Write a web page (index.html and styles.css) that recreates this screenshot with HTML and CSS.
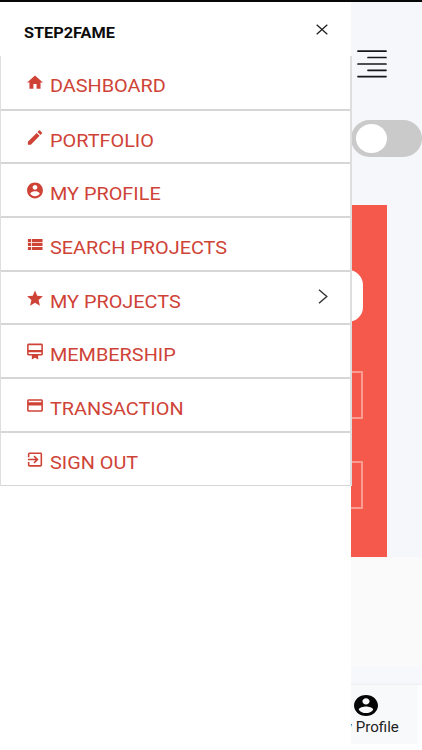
FILE: index.html
```html
<!DOCTYPE html>
<html lang="en">
<head>
<meta charset="utf-8">
<title>Step2Fame</title>
<link rel="stylesheet" href="styles.css">
</head>
<body>
<div class="screen">
  <main class="page">
    <header class="page-head">
      <svg class="burger" viewBox="0 0 30 28"><path d="M1 1.2H29M11 7.5H29M1 14H29M11 20.3H29M1 26.6H29"/></svg>
      <span class="toggle"><span class="knob"></span></span>
    </header>
    <section class="card">
      <div class="pill"></div>
      <div class="field"></div>
      <div class="field"></div>
    </section>
  </main>
  <div class="spacer"></div>
  <div class="strip"></div>
  <nav class="tabs">
    <div class="tab">
      <svg class="tab-icon" viewBox="2 2 20 20" preserveAspectRatio="none"><path d="M12 2C6.48 2 2 6.48 2 12s4.48 10 10 10 10-4.48 10-10S17.520 2 12 2zm0 3c1.660 0 3 1.340 3 3s-1.340 3-3 3-3-1.340-3-3 1.340-3 3-3zm0 14.200c-2.500 0-4.710-1.280-6-3.220.030-1.990 4-3.080 6-3.080 1.990 0 5.970 1.090 6 3.080-1.290 1.940-3.500 3.220-6 3.220z"/></svg>
      <span class="tab-label">My Profile</span>
    </div>
  </nav>
  <aside class="drawer">
    <header class="drawer-head">
      <h1 class="brand">STEP2FAME</h1>
      <svg class="close" viewBox="0 0 12 11"><path d="M.7.700 11.300 10.300M11.300.7.700 10.300"/></svg>
    </header>
    <ul class="menu">
      <li class="item"><svg class="icon" viewBox="0 0 24 24"><path d="M10 20v-6h4v6h5v-8h3L12 3 2 12h3v8z"/></svg><span class="label">DASHBOARD</span></li>
      <li class="item"><svg class="icon" viewBox="0 0 24 24"><path d="M3 17.250V21h3.750L17.810 9.940l-3.750-3.750L3 17.250zM20.710 7.040a1 1 0 0 0 0-1.410l-2.340-2.340a1 1 0 0 0-1.410 0l-1.830 1.830 3.750 3.750 1.830-1.830z"/></svg><span class="label">PORTFOLIO</span></li>
      <li class="item"><svg class="icon" viewBox="0 0 24 24"><path d="M12 2C6.480 2 2 6.480 2 12s4.480 10 10 10 10-4.480 10-10S17.520 2 12 2zm0 3c1.660 0 3 1.340 3 3s-1.340 3-3 3-3-1.340-3-3 1.340-3 3-3zm0 14.200c-2.500 0-4.710-1.280-6-3.220.030-1.990 4-3.080 6-3.080 1.990 0 5.970 1.090 6 3.080-1.290 1.940-3.500 3.220-6 3.220z"/></svg><span class="label">MY PROFILE</span></li>
      <li class="item"><svg class="icon" viewBox="0 0 24 24"><path d="M3 14h4v-4H3v4zm0 5h4v-4H3v4zm0-10h4V5H3v4zm5 5h13.500v-4H8v4zm0 5h13.500v-4H8v4zM8 5v4h13.500V5H8z"/></svg><span class="label">SEARCH PROJECTS</span></li>
      <li class="item"><svg class="icon" viewBox="0 0 24 24"><path d="M12 17.270 18.180 21l-1.640-7.030L22 9.240l-7.190-.610L12 2 9.190 8.630 2 9.240l5.460 4.730L5.820 21z"/></svg><span class="label">MY PROJECTS</span><svg class="chevron" viewBox="0 0 10 15"><path d="M1 .8 8.800 7.500 1 14.200"/></svg></li>
      <li class="item"><svg class="icon" viewBox="0 0 24 24"><path d="M20 2H4c-1.110 0-2 .890-2 2v11c0 1.110.890 2 2 2h4v5l4-2 4 2v-5h4c1.110 0 2-.890 2-2V4c0-1.110-.890-2-2-2zm0 13H4v-2h16v2zm0-5H4V4h16v6z"/></svg><span class="label">MEMBERSHIP</span></li>
      <li class="item"><svg class="icon" viewBox="0 0 24 24"><path d="M20 4H4c-1.110 0-1.990.890-1.990 2L2 18c0 1.110.890 2 2 2h16c1.110 0 2-.890 2-2V6c0-1.110-.890-2-2-2zm0 14H4v-6h16v6zm0-10H4V6h16v2z"/></svg><span class="label">TRANSACTION</span></li>
      <li class="item"><svg class="icon" viewBox="0 0 24 24"><path d="M10.090 15.590 11.500 17l5-5-5-5-1.410 1.410L12.670 11H3v2h9.670l-2.580 2.590zM19 3H5a2 2 0 0 0-2 2v4h2V5h14v14H5v-4H3v4a2 2 0 0 0 2 2h14c1.100 0 2-.900 2-2V5c0-1.100-.900-2-2-2z"/></svg><span class="label">SIGN OUT</span></li>
    </ul>
  </aside>
</div>
</body>
</html>
```
FILE: styles.css
```css
* { box-sizing: border-box; }

body {
  margin: 0;
  background: #fff;
  font-family: Roboto, "Liberation Sans", sans-serif;
}

.screen {
  position: relative;
  display: flex;
  flex-direction: column;
  width: 422px;
  height: 750px;
  overflow: hidden;
  border-top: 2px solid #070707;
}

.page {
  height: 555px;
  background: #f6f7fa;
}

.page-head {
  display: flex;
  flex-direction: column;
  align-items: flex-end;
  height: 203px;
  padding-top: 48px;
}

.burger {
  width: 30px;
  height: 28px;
  margin-right: 35px;
  fill: none;
  stroke: #17171a;
  stroke-width: 1.7;
  stroke-linecap: round;
}

.toggle {
  display: flex;
  align-items: center;
  width: 71px;
  height: 37px;
  margin-top: 42px;
  padding-left: 5px;
  border-radius: 19px;
  background: #cacaca;
}

.knob {
  width: 31px;
  height: 29px;
  border-radius: 50%;
  background: #fff;
}

.card {
  width: 351px;
  height: 352px;
  margin-left: 36px;
  padding: 65px 24px 0;
  background: #f4594c;
}

.pill {
  height: 52px;
  border-radius: 15px;
  background: #fff;
}

.field {
  height: 48px;
  margin-top: 42px;
  border: 2px solid #f99d94;
}

.pill + .field { margin-top: 49px; }

.spacer {
  height: 110px;
  background: #fafafa;
}

.strip {
  height: 18px;
  background: linear-gradient(#f7f8fb 85%, #eeeff1);
}

.tabs {
  display: flex;
  justify-content: flex-end;
  width: 418px;
  height: 59px;
  background: #f8f9fb;
}

.tab {
  display: flex;
  flex-direction: column;
  align-items: center;
  width: 105px;
  padding-top: 10px;
  color: #222;
  font-size: 14.500px;
  line-height: 20px;
  white-space: nowrap;
}

.tab-icon {
  width: 24px;
  height: 21px;
  margin-bottom: 2px;
  fill: #050505;
}

.tab-label {
  transform: scaleX(1.040);
}

.drawer {
  position: absolute;
  top: 0;
  left: 0;
  width: 351px;
  height: 748px;
  background: #fff;
}

.drawer-head {
  display: flex;
  justify-content: space-between;
  height: 54px;
  padding: 22px 23px 0 24px;
}

.brand {
  margin: 0;
  color: #0b0b0b;
  font-size: 15px;
  font-weight: 700;
  line-height: 18px;
  transform: scaleX(1.085);
  transform-origin: left;
}

.close {
  width: 12px;
  height: 11px;
  fill: none;
  stroke: #222;
  stroke-width: 1.300;
}

.menu {
  margin: 0 -1px 0 0;
  padding: 0;
  list-style: none;
  border: solid #dedede;
  border-width: 0 2px 0 1px;
}

.item {
  display: flex;
  align-items: flex-start;
  height: 53.700px;
  padding: 17px 22px 0 24px;
  border-bottom: 2px solid #d6d6d6;
}

.item:first-child { height: 54.500px; }

.item:last-child { border-bottom: 1px solid #d6d6d6; }

.icon {
  width: 20px;
  height: 19px;
  margin-right: 5px;
  fill: #cf4337;
}

.label {
  padding-top: 1px;
  color: #cf4337;
  font-size: 19px;
  line-height: 24px;
  transform: scaleX(1.045);
  transform-origin: left;
}

.chevron {
  width: 10px;
  height: 15px;
  margin-left: auto;
  fill: none;
  stroke: #333;
  stroke-width: 1.400;
}
```
